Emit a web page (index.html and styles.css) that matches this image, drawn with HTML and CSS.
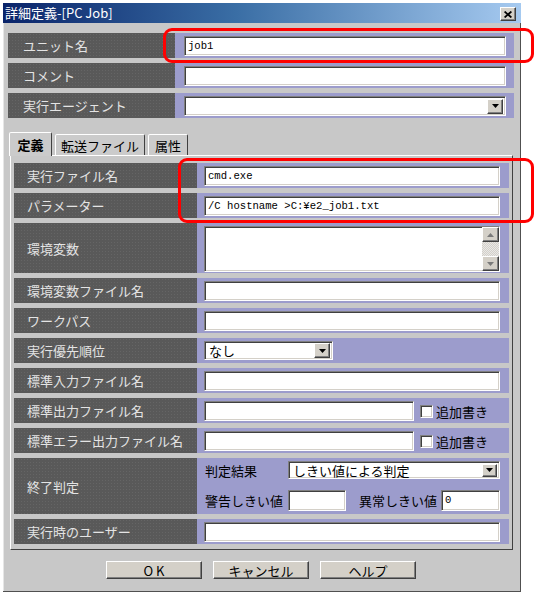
FILE: index.html
```html
<!DOCTYPE html>
<html lang="ja">
<head>
<meta charset="utf-8">
<title>詳細定義-[PC Job]</title>
<link rel="stylesheet" href="styles.css">
</head>
<body>
<div class="window">
  <div class="titlebar">
    <span class="title">詳細定義-[PC Job]</span>
    <span class="close-btn"><svg width="8" height="7" viewBox="0 0 8 7"><path d="M0.6 0.5 L7.4 6.5 M7.4 0.5 L0.6 6.5" stroke="#000" stroke-width="1.7" fill="none"/></svg></span>
  </div>

  <div class="top-rows">
    <div class="row">
      <div class="label">ユニット名</div>
      <div class="field"><div class="input mono">job1</div></div>
    </div>
    <div class="row">
      <div class="label">コメント</div>
      <div class="field"><div class="input"></div></div>
    </div>
    <div class="row">
      <div class="label">実行エージェント</div>
      <div class="field">
        <div class="input select">
          <span class="select-text"></span>
          <span class="drop-btn"><svg width="7" height="4" viewBox="0 0 7 4"><path d="M0 0 H7 L3.5 4 Z" fill="#000"/></svg></span>
        </div>
      </div>
    </div>
  </div>

  <div class="tabs">
    <div class="tab active">定義</div>
    <div class="tab tab-wide">転送ファイル</div>
    <div class="tab tab-narrow">属性</div>
  </div>

  <div class="panel">
    <div class="row">
      <div class="label">実行ファイル名</div>
      <div class="field"><div class="input mono">cmd.exe</div></div>
    </div>
    <div class="row">
      <div class="label">パラメーター</div>
      <div class="field"><div class="input mono">/C hostname &gt;C:¥e2_job1.txt</div></div>
    </div>
    <div class="row row-tall">
      <div class="label">環境変数</div>
      <div class="field">
        <div class="input textarea">
          <div class="scrollbar">
            <span class="sb-btn"><svg width="7" height="4" viewBox="0 0 7 4"><path d="M0 4 H7 L3.5 0 Z" fill="#7a7a7a"/></svg></span>
            <span class="sb-track"></span>
            <span class="sb-btn"><svg width="7" height="4" viewBox="0 0 7 4"><path d="M0 0 H7 L3.5 4 Z" fill="#7a7a7a"/></svg></span>
          </div>
        </div>
      </div>
    </div>
    <div class="row">
      <div class="label">環境変数ファイル名</div>
      <div class="field"><div class="input"></div></div>
    </div>
    <div class="row">
      <div class="label">ワークパス</div>
      <div class="field"><div class="input"></div></div>
    </div>
    <div class="row">
      <div class="label">実行優先順位</div>
      <div class="field">
        <div class="input select select-short">
          <span class="select-text">なし</span>
          <span class="drop-btn"><svg width="7" height="4" viewBox="0 0 7 4"><path d="M0 0 H7 L3.5 4 Z" fill="#000"/></svg></span>
        </div>
      </div>
    </div>
    <div class="row">
      <div class="label">標準入力ファイル名</div>
      <div class="field"><div class="input"></div></div>
    </div>
    <div class="row">
      <div class="label">標準出力ファイル名</div>
      <div class="field">
        <div class="combo">
          <div class="input input-mid"></div>
          <span class="checkbox"></span>
          <span class="cb-label">追加書き</span>
        </div>
      </div>
    </div>
    <div class="row">
      <div class="label">標準エラー出力ファイル名</div>
      <div class="field">
        <div class="combo">
          <div class="input input-mid"></div>
          <span class="checkbox"></span>
          <span class="cb-label">追加書き</span>
        </div>
      </div>
    </div>
    <div class="row row-judge">
      <div class="label">終了判定</div>
      <div class="field field-judge">
        <div class="sub sub-1">
          <span class="sub-label">判定結果</span>
          <div class="input select select-fill">
            <span class="select-text">しきい値による判定</span>
            <span class="drop-btn"><svg width="7" height="4" viewBox="0 0 7 4"><path d="M0 0 H7 L3.5 4 Z" fill="#000"/></svg></span>
          </div>
        </div>
        <div class="sub sub-2">
          <span class="sub-label">警告しきい値</span>
          <div class="input input-warn"></div>
          <span class="sub-label2">異常しきい値</span>
          <div class="input input-err mono">0</div>
        </div>
      </div>
    </div>
    <div class="row">
      <div class="label">実行時のユーザー</div>
      <div class="field"><div class="input"></div></div>
    </div>
  </div>

  <div class="buttons">
    <div class="btn btn-ok">OK</div>
    <div class="btn">キャンセル</div>
    <div class="btn">ヘルプ</div>
  </div>
</div>

<div class="mark mark-unit"></div>
<div class="mark mark-exec"></div>
</body>
</html>
```

FILE: styles.css
```css
* { box-sizing: border-box; }

html, body {
  margin: 0;
  padding: 0;
  background: #ffffff;
}

body {
  width: 536px;
  height: 597px;
  overflow: hidden;
  position: relative;
  font-family: "Noto Sans CJK JP", "Noto Sans", sans-serif;
  font-size: 13px;
  line-height: 1;
  color: #000;
}

.window {
  margin: 3px 0 0 3px;
  width: 518px;
  height: 589px;
  background: #c8c8c8;
  box-shadow: inset -1px -1px #505050, inset 1px 0 #e6e6e6;
  display: flex;
  flex-direction: column;
}

/* title bar */
.titlebar {
  flex: none;
  height: 20px;
  background: linear-gradient(to right, #0a246a 0%, #3a6ea5 45%, #a6caf0 100%);
  display: flex;
  justify-content: space-between;
  align-items: flex-start;
  padding: 0 5px 0 2px;
}

.title {
  color: #ffffff;
  font-size: 13px;
  line-height: 20px;
  white-space: nowrap;
}

.close-btn {
  margin-top: 4px;
  width: 16px;
  height: 14px;
  background: #d4d0c8;
  border: 1px solid;
  border-color: #ffffff #404040 #404040 #ffffff;
  box-shadow: inset -1px -1px #808080;
  display: flex;
  align-items: center;
  justify-content: center;
}

/* rows */
.top-rows {
  margin-top: 10px;
  padding: 0 7px 0 5px;
  display: flex;
  flex-direction: column;
  gap: 5px;
}

.row {
  display: flex;
  height: 25px;
}

.label {
  flex: none;
  width: 167px;
  background-color: #595959;
  background-image: radial-gradient(rgba(255,255,255,0.07) 0.6px, transparent 0.8px);
  background-size: 3px 3px;
  color: #e4e4e4;
  padding-left: 15px;
  line-height: 25px;
  white-space: nowrap;
}

.field {
  flex: 1;
  min-width: 0;
  background: #9c9ccc;
  padding: 3px 8px 0 9px;
  display: flex;
  align-items: flex-start;
}

.input {
  flex: 1;
  min-width: 0;
  height: 20px;
  background: #ffffff;
  border: 1px solid;
  border-color: #808080 #ffffff #ffffff #808080;
  box-shadow: inset 1px 1px #404040, inset -1px -1px #d4d0c8;
  display: flex;
  align-items: center;
  padding-left: 3px;
  white-space: nowrap;
  overflow: hidden;
}

.mono {
  font-family: "Liberation Mono", "Noto Sans CJK JP", monospace;
  font-size: 10.6px;
}

.select {
  padding-right: 2px;
}

.select-text {
  flex: 1;
  min-width: 0;
  padding-left: 1px;
}

.drop-btn {
  flex: none;
  width: 16px;
  height: 15px;
  background: #d4d0c8;
  border: 1px solid;
  border-color: #ffffff #404040 #404040 #ffffff;
  box-shadow: inset -1px -1px #808080;
  display: flex;
  align-items: center;
  justify-content: center;
}

/* tabs */
.tabs {
  margin-top: 14px;
  height: 23px;
  padding-left: 6px;
  display: flex;
  align-items: flex-end;
  gap: 3px;
  flex: none;
}

.tab {
  width: 43px;
  height: 21px;
  background: #cbcbcb;
  border: 1px solid;
  border-bottom: none;
  border-color: #ffffff #404040 transparent #ffffff;
  border-radius: 2px 2px 0 0;
  display: flex;
  align-items: center;
  justify-content: center;
  white-space: nowrap;
  position: relative;
}

.tab.active {
  font-weight: bold;
  z-index: 1;
  margin-bottom: -1px;
  height: 24px;
}

.tab-wide { width: 90px; }
.tab-narrow { width: 40px; }

/* panel */
.panel {
  flex: none;
  margin: 0 8px 0 7px;
  height: 395px;
  border: 1px solid;
  border-color: #ffffff #404040 #404040 #ffffff;
  padding: 7px 3px 5px 3px;
  display: flex;
  flex-direction: column;
  gap: 5px;
}

.panel .label {
  width: 183px;
  padding-left: 13px;
}

.panel .field {
  padding: 3px 9px 0 7px;
}

.row-tall { height: 50px; }
.row-tall .label,
.row-judge .label {
  display: flex;
  align-items: center;
  line-height: 1;
}

.textarea {
  height: 46px;
  justify-content: flex-end;
  align-items: stretch;
  padding: 0;
}

.scrollbar {
  width: 17px;
  display: flex;
  flex-direction: column;
}

.sb-btn {
  flex: none;
  height: 15px;
  background: #d4d0c8;
  border: 1px solid;
  border-color: #ffffff #404040 #404040 #ffffff;
  box-shadow: inset -1px -1px #808080;
  display: flex;
  align-items: center;
  justify-content: center;
}

.sb-track {
  flex: 1;
  background-color: #e8e8e8;
  background-image:
    linear-gradient(45deg, #d4d0c8 25%, transparent 25%, transparent 75%, #d4d0c8 75%),
    linear-gradient(45deg, #d4d0c8 25%, transparent 25%, transparent 75%, #d4d0c8 75%);
  background-size: 2px 2px;
  background-position: 0 0, 1px 1px;
}

.select-short {
  flex: none;
  width: 129px;
  height: 19px;
}

.combo {
  flex: 1;
  display: flex;
  align-items: center;
  height: 20px;
}

.input-mid {
  flex: none;
  width: 210px;
}

.checkbox {
  flex: none;
  width: 13px;
  height: 13px;
  margin-left: 6px;
  background: #ffffff;
  border: 1px solid;
  border-color: #808080 #ffffff #ffffff #808080;
  box-shadow: inset 1px 1px #404040, inset -1px -1px #d4d0c8;
}

.cb-label {
  margin-left: 3px;
  white-space: nowrap;
}

.row-judge { height: 56px; }

.field-judge {
  flex-direction: column;
  align-items: stretch;
  padding: 4px 9px 0 7px;
  gap: 11px;
}

.sub {
  display: flex;
  align-items: center;
}

.sub-1 { height: 18px; }
.sub-2 { height: 21px; }

.sub-label {
  flex: none;
  width: 84px;
  padding-left: 1px;
  white-space: nowrap;
}

.select-fill {
  height: 18px;
}

.select-fill .drop-btn {
  height: 13px;
  width: 15px;
}

.input-warn {
  flex: none;
  width: 58px;
  height: 21px;
}

.sub-label2 {
  margin-left: 13px;
  white-space: nowrap;
}

.input-err {
  margin-left: 4px;
  height: 21px;
}

/* buttons */
.buttons {
  margin-top: 11px;
  padding-right: 2px;
  display: flex;
  justify-content: center;
  gap: 11px;
}

.btn {
  width: 96px;
  height: 18px;
  background: #d4d0c8;
  border: 1px solid;
  border-color: #ffffff #404040 #404040 #ffffff;
  box-shadow: inset -1px -1px #808080;
  display: flex;
  align-items: center;
  justify-content: center;
  white-space: nowrap;
}

.btn-ok {
  letter-spacing: 3px;
  padding-left: 3px;
}

/* annotation marks */
.mark {
  position: absolute;
  border: 3px solid #ff0000;
  border-radius: 9px;
}

.mark-unit {
  left: 163px;
  top: 28px;
  width: 371px;
  height: 35px;
}

.mark-exec {
  left: 178px;
  top: 158px;
  width: 356px;
  height: 65px;
}
```
